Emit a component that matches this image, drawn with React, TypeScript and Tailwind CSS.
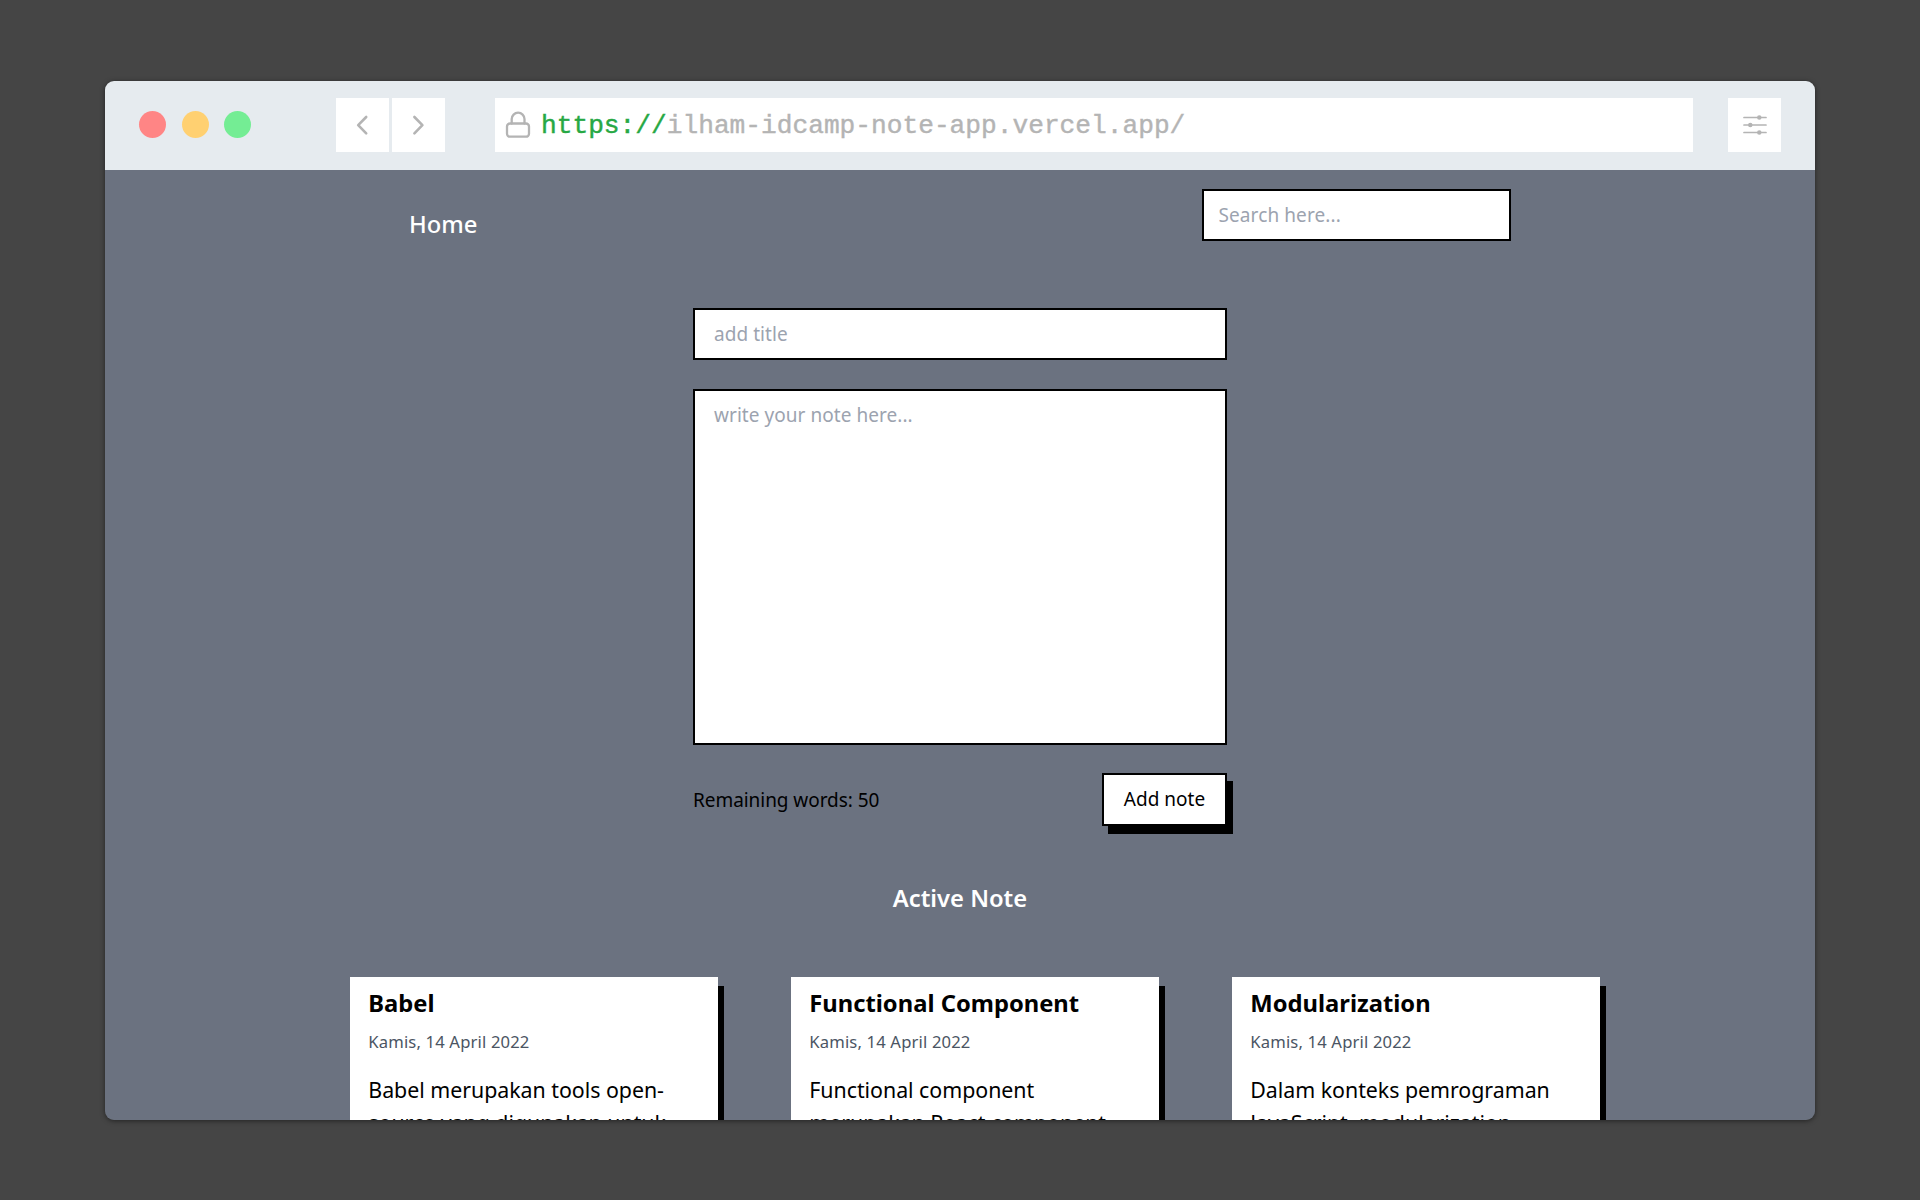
const notes = [
  { title: 'Babel', lines: ['Babel merupakan tools open-', 'source yang digunakan untuk'] },
  { title: 'Functional Component', lines: ['Functional component', 'merupakan React component'] },
  { title: 'Modularization', lines: ['Dalam konteks pemrograman', 'JavaScript, modularization'] },
];

function BrowserBar() {
  return (
    <header className="flex h-[89px] shrink-0 items-center bg-[#e6ebef] pr-[34px] pb-px pl-[34px]">
      <div className="flex w-[197px] gap-[15.5px] pb-px">
        <span className="size-[27px] rounded-full bg-[#ff8585]" />
        <span className="size-[27px] rounded-full bg-[#ffd071]" />
        <span className="size-[27px] rounded-full bg-[#74ed94]" />
      </div>
      <div className="flex gap-[3px]">
        <div className="h-[54px] w-[53px] bg-white">
          <svg width="53" height="54" fill="none" stroke="#b4b4b4" strokeWidth="2.6" strokeLinecap="round" strokeLinejoin="round">
            <path d="M30.2 19 22.2 27.2l8 8.2" />
          </svg>
        </div>
        <div className="h-[54px] w-[53px] bg-white">
          <svg width="53" height="54" fill="none" stroke="#b4b4b4" strokeWidth="2.6" strokeLinecap="round" strokeLinejoin="round">
            <path d="M22.4 19 30.4 27.2l-8 8.2" />
          </svg>
        </div>
      </div>
      <div className="ml-[50px] flex h-[54px] w-[1198px] items-center bg-white pl-[10px]">
        <svg className="shrink-0" width="28" height="30" fill="none" stroke="#b4b4b4" strokeWidth="2.3" strokeLinecap="round" strokeLinejoin="round">
          <rect x="2" y="13.5" width="22" height="13.2" rx="3" />
          <path d="M6.7 13.5V9.1a6.4 6.4 0 0 1 12.8 0V13.5" />
        </svg>
        <span className="mt-[2px] ml-[8px] font-['Liberation_Mono',monospace] text-[26.2px] leading-[30px] whitespace-pre text-[#b4b4b4] [-webkit-text-stroke:0.4px_currentColor]">
          <span className="text-[#27a844]">https://</span>ilham-idcamp-note-app.vercel.app/
        </span>
      </div>
      <div className="ml-[35px] h-[54px] w-[53px] bg-white">
        <svg width="53" height="54" stroke="#b4b4b4" strokeWidth="1.7" strokeLinecap="round" fill="#b4b4b4">
          <path d="M16 19.5h22M16 27h22M16 34.5h22" />
          <circle cx="31.3" cy="19.5" r="1.4" />
          <circle cx="22.3" cy="27" r="1.4" />
          <circle cx="31.3" cy="34.5" r="1.4" />
        </svg>
      </div>
    </header>
  );
}

export default function App() {
  return (
    <div className="h-[1200px] w-[1920px] overflow-hidden bg-[#454545] px-[105px] pt-[81px] font-['Noto_Sans',sans-serif]">
      <div className="flex h-[1039px] w-[1710px] flex-col overflow-hidden rounded-[9px] shadow-[0_1px_5px_rgba(0,0,0,0.5)]">
        <BrowserBar />
        <main className="flex flex-1 flex-col items-center overflow-hidden bg-[#6b7280] text-[19px] leading-[28.5px] text-black">
          <nav className="flex h-[138px] w-[1102px] shrink-0 justify-between pt-[19px]">
            <a className="mt-[19px] text-[23.75px] leading-[33px] font-medium text-white">Home</a>
            <input className="h-[52px] w-[309px] border-[2.4px] border-black bg-white px-[14.5px] tracking-[0.1px] placeholder:text-[#9ca3af]" placeholder="Search here..." />
          </nav>
          <form className="flex w-[534px] shrink-0 flex-col">
            <input className="h-[52px] border-[2.4px] border-black bg-white px-[19px] tracking-[0.05px] placeholder:text-[#9ca3af]" placeholder="add title" />
            <textarea className="mt-[29px] h-[356px] resize-none border-[2.4px] border-black bg-white px-[19px] py-[9.5px] tracking-[0.05px] placeholder:text-[#9ca3af]" placeholder="write your note here..." />
            <div className="mt-[28px] flex items-center justify-between">
              <span className="pt-px tracking-[-0.05px]">Remaining words: 50</span>
              <button type="button" className="h-[53px] w-[125px] border-[2.4px] border-black bg-white whitespace-nowrap shadow-[6px_8px_0_0_#000]">Add note</button>
            </div>
          </form>
          <h2 className="mt-[56px] text-[23.75px] leading-[33px] font-semibold text-white">Active Note</h2>
          <section className="mt-[62px] flex shrink-0 gap-[73px] self-start pl-[244.5px]">
            {notes.map((note) => (
              <article key={note.title} className="h-[240px] w-[368px] bg-white px-[18.8px] pt-[9.5px] shadow-[6px_9px_0_0_#000]">
                <h3 className="text-[23.75px] leading-[33.25px] font-bold">{note.title}</h3>
                <p className="mt-[10px] text-[16.625px] leading-[23.75px] tracking-[0.16px] text-[#4b5563]">Kamis, 14 April 2022</p>
                <p className="mt-[19px] text-[21.375px] leading-[33.25px] tracking-[-0.03px] whitespace-nowrap">
                  {note.lines.map((line) => (
                    <span key={line} className="block">{line}</span>
                  ))}
                </p>
              </article>
            ))}
          </section>
        </main>
      </div>
    </div>
  );
}
